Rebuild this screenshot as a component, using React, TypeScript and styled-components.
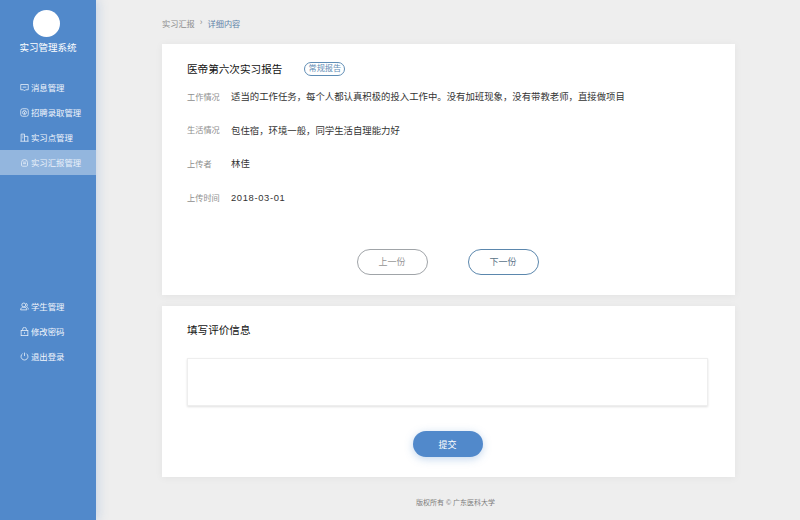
import React from "react";
import styled, { createGlobalStyle } from "styled-components";

const GlobalStyle = createGlobalStyle`
  html, body {
    margin: 0;
    padding: 0;
    height: 520px;
    overflow: hidden;
    background: #eeeeee;
    font-family: "Liberation Sans", "Noto Sans CJK SC", sans-serif;
  }
  * { box-sizing: border-box; }
`;

const Page = styled.div`
  display: flex;
  width: 800px;
  height: 520px;
  overflow: hidden;
`;

const Sidebar = styled.aside`
  width: 96px;
  flex-shrink: 0;
  height: 520px;
  background: #5189cb;
  box-shadow: 2px 0 10px rgba(81, 137, 203, 0.25);
  display: flex;
  flex-direction: column;
  padding-top: 10px;
`;

const Avatar = styled.div`
  width: 27px;
  height: 27px;
  border-radius: 50%;
  background: #fff;
  flex-shrink: 0;
  margin-left: 33px;
`;

const SystemName = styled.div`
  color: #fff;
  font-size: 9.5px;
  font-weight: 400;
  text-align: center;
  margin-top: 4px;
  line-height: 14px;
  margin-bottom: 20px;
`;

const Nav = styled.nav`
  display: flex;
  flex-direction: column;
`;

const BottomNav = styled(Nav)`
  margin-top: 119px;
`;

const NavItem = styled.div<{ $active?: boolean }>`
  height: 25px;
  display: flex;
  align-items: center;
  gap: 2px;
  padding: 0 0 1px 20px;
  color: ${(p) => (p.$active ? "#eaf1fa" : "#f1f5fb")};
  background: ${(p) => (p.$active ? "#93b6de" : "transparent")};
  font-size: 8.4px;
  white-space: nowrap;

  svg {
    width: 9px;
    height: 9px;
    flex-shrink: 0;
  }
`;

const Main = styled.main`
  flex: 1;
  display: flex;
  flex-direction: column;
  padding: 0 65px 0 66px;
`;

const Breadcrumb = styled.div`
  height: 44px;
  display: flex;
  align-items: center;
  gap: 5px;
  padding-top: 1px;
  font-size: 8.2px;
  color: #8d8d8d;
`;

const Current = styled.span`
  color: #5f83a8;
`;

const Card = styled.section`
  background: #fff;
  box-shadow: 0 1px 8px rgba(0, 0, 0, 0.05);
`;

const ReportCard = styled(Card)`
  height: 251px;
  padding: 17px 25px 0;
  display: flex;
  flex-direction: column;
`;

const TitleRow = styled.div`
  display: flex;
  align-items: center;
  height: 15px;
  gap: 22px;
  margin-bottom: 13px;
`;

const Title = styled.h2`
  margin: 0;
  font-size: 10.6px;
  font-weight: 400;
  color: #111;
`;

const Tag = styled.span`
  width: 41px;
  height: 14px;
  border: 1px solid #5f8db5;
  border-radius: 7px;
  color: #5f8db5;
  font-size: 8.2px;
  line-height: 12px;
  text-align: center;
`;

const InfoRow = styled.div`
  display: flex;
  align-items: center;
  height: 14px;
  margin-bottom: 19.7px;
`;

const InfoLabel = styled.span`
  width: 44px;
  flex-shrink: 0;
  margin-bottom: 1px;
  font-size: 8.2px;
  color: #8e8e8e;
`;

const InfoValue = styled.span<{ $date?: boolean }>`
  font-size: 9.4px;
  color: #333;
  letter-spacing: ${(p) => (p.$date ? "0.65px" : "0")};
`;

const Pager = styled.div`
  display: flex;
  justify-content: center;
  gap: 40px;
  margin-top: 25px;
  margin-right: 2px;
`;

const PagerButton = styled.button<{ $next?: boolean }>`
  width: 71px;
  height: 26px;
  border-radius: 13px;
  background: #fff;
  padding: 0;
  font-family: inherit;
  font-size: 9px;
  border: 1px solid ${(p) => (p.$next ? "#5b87ad" : "#a0a4a8")};
  color: ${(p) => (p.$next ? "#5a7286" : "#949494")};
`;

const ReviewCard = styled(Card)`
  margin-top: 11px;
  height: 171px;
  padding: 17px 26px 0 25px;
  display: flex;
  flex-direction: column;
`;

const ReviewTitle = styled.h3`
  margin: 0 0 20px;
  font-size: 10.6px;
  line-height: 15px;
  font-weight: 400;
  color: #111;
`;

const ReviewInput = styled.textarea`
  display: block;
  width: 521px;
  height: 48px;
  flex-shrink: 0;
  border: 1px solid #eeeeee;
  box-shadow: 0 1px 2px rgba(0, 0, 0, 0.12);
  outline: none;
  resize: none;
  background: #fff;
`;

const SubmitButton = styled.button`
  align-self: center;
  width: 70px;
  height: 26px;
  margin-top: 25px;
  margin-right: 1px;
  border: none;
  border-radius: 13px;
  background: #5189cb;
  box-shadow: 0 2px 8px rgba(81, 137, 203, 0.35);
  color: #fff;
  font-family: inherit;
  font-size: 9px;
  padding: 0;
`;

const Footer = styled.footer`
  margin-top: 21px;
  padding-left: 14px;
  text-align: center;
  font-size: 7px;
  line-height: 10px;
  color: #7c7c7c;
`;

const Icon = ({ children }: { children: React.ReactNode }) => (
  <svg viewBox="0 0 12 12" fill="none" stroke="currentColor" strokeWidth="1">
    {children}
  </svg>
);

const App = () => {
  return (
    <Page>
      <GlobalStyle />
      <Sidebar>
        <Avatar />
        <SystemName>实习管理系统</SystemName>
        <Nav>
          <NavItem>
            <Icon>
              <path d="M1 2h10v7H7.5L6 10.5 4.5 9H1zM3.5 5.5h5" />
            </Icon>
            消息管理
          </NavItem>
          <NavItem>
            <Icon>
              <rect x="1" y="1" width="10" height="10" rx="2.5" />
              <circle cx="6" cy="6" r="2.6" />
              <path d="M4.8 4.6 6 6l1.2-1.4M6 6v2" />
            </Icon>
            招聘录取管理
          </NavItem>
          <NavItem>
            <Icon>
              <path d="M1.5 11V1.5h4.5V11M6 4.5h4.5V11M.5 11h11M3 4h1.5M3 6.5h1.5" />
            </Icon>
            实习点管理
          </NavItem>
          <NavItem $active>
            <Icon>
              <path d="M2 6a4 4 0 1 1 8 0v3.5a1.5 1.5 0 0 1-1.5 1.5h-5A1.5 1.5 0 0 1 2 9.5z" />
              <path d="M4 5.5h4M4 7.5h4" />
            </Icon>
            实习汇报管理
          </NavItem>
        </Nav>
        <BottomNav>
          <NavItem>
            <Icon>
              <circle cx="5" cy="4" r="2.6" />
              <path d="M.8 10.5c0-2.4 1.8-3.6 4.2-3.6s4.2 1.2 4.2 3.6zM8 1.7a2.6 2.6 0 0 1 .6 4.6c1.6.5 2.6 1.9 2.6 3.6" />
            </Icon>
            学生管理
          </NavItem>
          <NavItem>
            <Icon>
              <rect x="1.5" y="4.5" width="9" height="7" />
              <path d="M3.5 4.5V3a2.5 2.5 0 0 1 5 0v1.5M6 7v2" />
            </Icon>
            修改密码
          </NavItem>
          <NavItem>
            <Icon>
              <path d="M3.5 2.2a4.6 4.6 0 1 0 5 0M6 .8v4.6" />
            </Icon>
            退出登录
          </NavItem>
        </BottomNav>
      </Sidebar>
      <Main>
        <Breadcrumb>
          <span>实习汇报</span>
          <span>›</span>
          <Current>详细内容</Current>
        </Breadcrumb>
        <ReportCard>
          <TitleRow>
            <Title>医帝第六次实习报告</Title>
            <Tag>常规报告</Tag>
          </TitleRow>
          <InfoRow>
            <InfoLabel>工作情况</InfoLabel>
            <InfoValue>适当的工作任务，每个人都认真积极的投入工作中。没有加班现象，没有带教老师，直接做项目</InfoValue>
          </InfoRow>
          <InfoRow>
            <InfoLabel>生活情况</InfoLabel>
            <InfoValue>包住宿，环境一般，同学生活自理能力好</InfoValue>
          </InfoRow>
          <InfoRow>
            <InfoLabel>上传者</InfoLabel>
            <InfoValue>林佳</InfoValue>
          </InfoRow>
          <InfoRow>
            <InfoLabel>上传时间</InfoLabel>
            <InfoValue $date>2018-03-01</InfoValue>
          </InfoRow>
          <Pager>
            <PagerButton>上一份</PagerButton>
            <PagerButton $next>下一份</PagerButton>
          </Pager>
        </ReportCard>
        <ReviewCard>
          <ReviewTitle>填写评价信息</ReviewTitle>
          <ReviewInput />
          <SubmitButton>提交</SubmitButton>
        </ReviewCard>
        <Footer>版权所有 © 广东医科大学</Footer>
      </Main>
    </Page>
  );
};

export default App;
